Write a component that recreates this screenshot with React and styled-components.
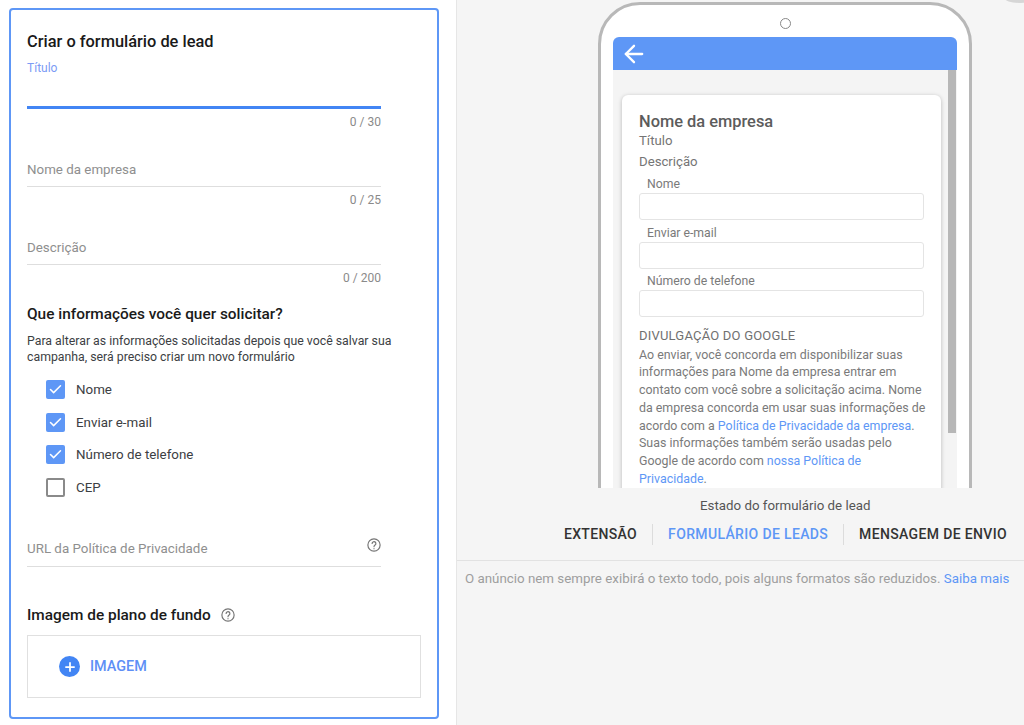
import React from 'react';
import styled, { createGlobalStyle } from 'styled-components';
import { ArrowLeft, Check, Plus } from 'lucide-react';

const BLUE = '#4285f4';

const GlobalStyle = createGlobalStyle`
  html, body {
    margin: 0;
    padding: 0;
    background: #fff;
    font-family: Roboto, "Liberation Sans", sans-serif;
  }
`;

const Page = styled.div`
  display: flex;
  width: 1024px;
  height: 725px;
  overflow: hidden;
`;

const LeftPane = styled.div`
  width: 457px;
  box-sizing: border-box;
  padding: 8px 17px 0 9px;
  background: #fff;
  border-right: 1px solid #e6e6e6;
  flex: none;
`;

const Card = styled.div`
  height: 711px;
  box-sizing: border-box;
  padding: 22px 16px 0 16px;
  border: 2px solid #5e97f6;
  border-radius: 4px;
`;

const Heading = styled.div`
  display: flex;
  align-items: center;
  gap: 10px;
  font-size: ${p => p.$size || 15.4}px;
  line-height: 20px;
  font-weight: 500;
  color: #1a1a1a;
  margin-top: ${p => p.$top || 0}px;
`;

const Field = styled.div`
  position: relative;
  width: 354px;
  padding-top: ${p => p.$top || 0}px;
`;

const FloatLabel = styled.div`
  font-size: ${p => (p.$active ? 12 : 13.35)}px;
  line-height: 16px;
  color: ${p => (p.$active ? '#7c9cf5' : '#8f8f8f')};
`;

const Line = styled.div`
  margin-top: ${p => p.$gap}px;
  height: ${p => (p.$active ? 3 : 1)}px;
  background: ${p => (p.$active ? BLUE : '#dedede')};
`;

const Counter = styled.div`
  text-align: right;
  font-size: 12px;
  line-height: 14px;
  margin-top: 6px;
  color: #8a8a8a;
`;

const Help = styled.svg`
  width: 14px;
  height: 14px;
  flex: none;
`;

const FieldHelp = styled.div`
  position: absolute;
  right: 0;
  top: ${p => p.$top}px;
  display: flex;
`;

const Hint = styled.p`
  margin: 9px 0 0;
  width: 372px;
  font-size: 12.3px;
  line-height: 16px;
  color: #3c4043;
`;

const CheckList = styled.div`
  display: flex;
  flex-direction: column;
  gap: 13.7px;
  margin: 15px 0 0 19px;
`;

const CheckRow = styled.div`
  display: flex;
  align-items: center;
  gap: 11px;
  height: 19px;
  font-size: 13.35px;
  color: #3c4043;
`;

const Box = styled.span`
  width: 19px;
  height: 19px;
  box-sizing: border-box;
  border-radius: 2px;
  display: flex;
  align-items: center;
  justify-content: center;
  color: #fff;
  background: ${p => (p.$on ? '#5e97f6' : '#fff')};
  border: ${p => (p.$on ? 'none' : '2px solid #8a8a8a')};
`;

const UploadBox = styled.div`
  margin-top: 10px;
  width: 394px;
  height: 63px;
  box-sizing: border-box;
  border: 1px solid #e0e0e0;
  display: flex;
  align-items: center;
  gap: 10px;
  padding-left: 31px;
`;

const PlusCircle = styled.span`
  width: 21px;
  height: 21px;
  border-radius: 50%;
  background: ${BLUE};
  color: #fff;
  display: flex;
  align-items: center;
  justify-content: center;
`;

const UploadText = styled.span`
  font-size: 14.4px;
  font-weight: 500;
  color: #5e8ff6;
`;

const RightPane = styled.div`
  flex: 1;
  position: relative;
  background: #f5f5f5;
  display: flex;
  flex-direction: column;
`;

const CornerShadow = styled.div`
  position: absolute;
  top: -8px;
  right: -12px;
  width: 32px;
  height: 11px;
  border-radius: 50%;
  background: #d6d6d6;
`;

const PhoneClip = styled.div`
  height: 488px;
  flex: none;
  overflow: hidden;
  padding: 2px 0 0 141px;
  box-sizing: border-box;
`;

const Phone = styled.div`
  width: 374px;
  height: 560px;
  box-sizing: border-box;
  background: #fff;
  border: 3px solid #b8b8b8;
  border-radius: 42px 42px 0 0;
  padding: 0 12px;
  display: flex;
  flex-direction: column;
  align-items: stretch;
`;

const Camera = styled.div`
  width: 9px;
  height: 9px;
  border: 1px solid #888;
  border-radius: 50%;
  align-self: center;
  margin: 13px 0 8px;
  flex: none;
`;

const AppBar = styled.div`
  height: 33px;
  flex: none;
  background: #5e97f6;
  border-radius: 6px 6px 0 0;
  color: #fff;
  display: flex;
  align-items: center;
  padding-left: 7px;
`;

const Screen = styled.div`
  position: relative;
  flex: 1;
  background: #f4f4f4;
  padding: 25px 16px 0 9px;
`;

const ScrollThumb = styled.div`
  position: absolute;
  top: 0;
  right: 1px;
  width: 8px;
  height: 363px;
  background: #b7b7b7;
`;

const LeadCard = styled.div`
  background: #fff;
  border-radius: 6px;
  box-shadow: 0 1px 4px rgba(0, 0, 0, 0.25);
  padding: 17px 17px 40px;
  height: 500px;
  box-sizing: border-box;
  color: #5f6368;
`;

const LeadName = styled.div`
  font-size: 16.4px;
  line-height: 20px;
  font-weight: 500;
  color: #5c5c5c;
`;

const LeadLine = styled.div`
  font-size: 13.2px;
  line-height: 16px;
  margin-top: ${p => p.$top}px;
  color: #757575;
`;

const InputLabel = styled.div`
  font-size: 12.25px;
  line-height: 15px;
  padding-left: 8px;
  color: #7a7a7a;
  margin-top: ${p => p.$top}px;
`;

const FakeInput = styled.div`
  height: 27px;
  width: 285px;
  box-sizing: border-box;
  margin-top: 1px;
  border: 1px solid #e4e4e4;
  border-radius: 3px;
`;

const DisclosureTitle = styled.div`
  margin-top: 10.5px;
  font-size: 13px;
  line-height: 16px;
  letter-spacing: 0.2px;
  color: #707070;
`;

const Disclosure = styled.p`
  margin: 2px -3px 0 0;
  font-size: 12.4px;
  line-height: 17.8px;
  color: #7a7a7a;
`;

const PolicyLink = styled.span`
  color: #5e97f6;
`;

const StateTitle = styled.div`
  margin-top: 10px;
  padding-left: 243px;
  font-size: 13.3px;
  line-height: 16px;
  color: #555;
`;

const Tabs = styled.div`
  display: flex;
  align-items: center;
  justify-content: flex-end;
  height: 21px;
  margin-top: 10px;
  padding-right: 2px;
`;

const Tab = styled.div`
  font-size: 14px;
  font-weight: 500;
  letter-spacing: 0.35px;
  color: ${p => (p.$active ? '#5e97f6' : '#333')};
  padding: 0 15px;
  line-height: 21px;
  border-left: ${p => (p.$first ? 'none' : '1px solid #dcdcdc')};
  white-space: nowrap;
`;

const Footer = styled.div`
  margin-top: 15px;
  border-top: 1px solid #e2e2e2;
  padding: 10px 0 0 8px;
  font-size: 13.33px;
  line-height: 16px;
  color: #9e9e9e;
  white-space: nowrap;
`;

const HelpIcon = () => (
  <Help viewBox="0 0 24 24" fill="none" stroke="#757575" strokeWidth="2">
    <circle cx="12" cy="12" r="10.5" />
    <path d="M8.8 9.4a3.2 3.2 0 1 1 5 2.7c-1.2.8-1.8 1.4-1.8 2.9" strokeLinecap="round" />
    <path d="M12 17.4v1.8" />
  </Help>
);

const CHECKS = [
  { label: 'Nome', on: true },
  { label: 'Enviar e-mail', on: true },
  { label: 'Número de telefone', on: true },
  { label: 'CEP', on: false }
];

const App = () => (
  <Page>
    <GlobalStyle />
    <LeftPane>
      <Card>
        <Heading $size={16.4}>Criar o formulário de lead</Heading>
        <Field $top={8}>
          <FloatLabel $active>Título</FloatLabel>
          <Line $active $gap={30} />
          <Counter>0 / 30</Counter>
        </Field>
        <Field $top={33}>
          <FloatLabel>Nome da empresa</FloatLabel>
          <Line $gap={8} />
          <Counter>0 / 25</Counter>
        </Field>
        <Field $top={33}>
          <FloatLabel>Descrição</FloatLabel>
          <Line $gap={8} />
          <Counter>0 / 200</Counter>
        </Field>
        <Heading $top={19}>Que informações você quer solicitar?</Heading>
        <Hint>
          Para alterar as informações solicitadas depois que você salvar sua campanha, será
          preciso criar um novo formulário
        </Hint>
        <CheckList>
          {CHECKS.map(item => (
            <CheckRow key={item.label}>
              <Box $on={item.on}>{item.on && <Check size={15} strokeWidth={2.4} />}</Box>
              {item.label}
            </CheckRow>
          ))}
        </CheckList>
        <Field $top={44}>
          <FloatLabel>URL da Política de Privacidade</FloatLabel>
          <FieldHelp $top={41}>
            <HelpIcon />
          </FieldHelp>
          <Line $gap={9} />
        </Field>
        <Heading $top={38}>
          Imagem de plano de fundo
          <HelpIcon />
        </Heading>
        <UploadBox>
          <PlusCircle>
            <Plus size={14} strokeWidth={3} />
          </PlusCircle>
          <UploadText>IMAGEM</UploadText>
        </UploadBox>
      </Card>
    </LeftPane>
    <RightPane>
      <CornerShadow />
      <PhoneClip>
        <Phone>
          <Camera />
          <AppBar>
            <ArrowLeft size={28} strokeWidth={2} />
          </AppBar>
          <Screen>
            <ScrollThumb />
            <LeadCard>
              <LeadName>Nome da empresa</LeadName>
              <LeadLine $top={1}>Título</LeadLine>
              <LeadLine $top={5}>Descrição</LeadLine>
              <InputLabel $top={7}>Nome</InputLabel>
              <FakeInput />
              <InputLabel $top={5.5}>Enviar e-mail</InputLabel>
              <FakeInput />
              <InputLabel $top={5.5}>Número de telefone</InputLabel>
              <FakeInput />
              <DisclosureTitle>DIVULGAÇÃO DO GOOGLE</DisclosureTitle>
              <Disclosure>
                Ao enviar, você concorda em disponibilizar suas informações para Nome da empresa
                entrar em contato com você sobre a solicitação acima. Nome da empresa concorda em
                usar suas informações de acordo com a{' '}
                <PolicyLink>Política de Privacidade da empresa</PolicyLink>. Suas informações
                também serão usadas pelo Google de acordo com{' '}
                <PolicyLink>nossa Política de Privacidade</PolicyLink>.
              </Disclosure>
            </LeadCard>
          </Screen>
        </Phone>
      </PhoneClip>
      <StateTitle>Estado do formulário de lead</StateTitle>
      <Tabs>
        <Tab $first>EXTENSÃO</Tab>
        <Tab $active>FORMULÁRIO DE LEADS</Tab>
        <Tab>MENSAGEM DE ENVIO</Tab>
      </Tabs>
      <Footer>
        O anúncio nem sempre exibirá o texto todo, pois alguns formatos são reduzidos.{' '}
        <PolicyLink>Saiba mais</PolicyLink>
      </Footer>
    </RightPane>
  </Page>
);

export default App;
